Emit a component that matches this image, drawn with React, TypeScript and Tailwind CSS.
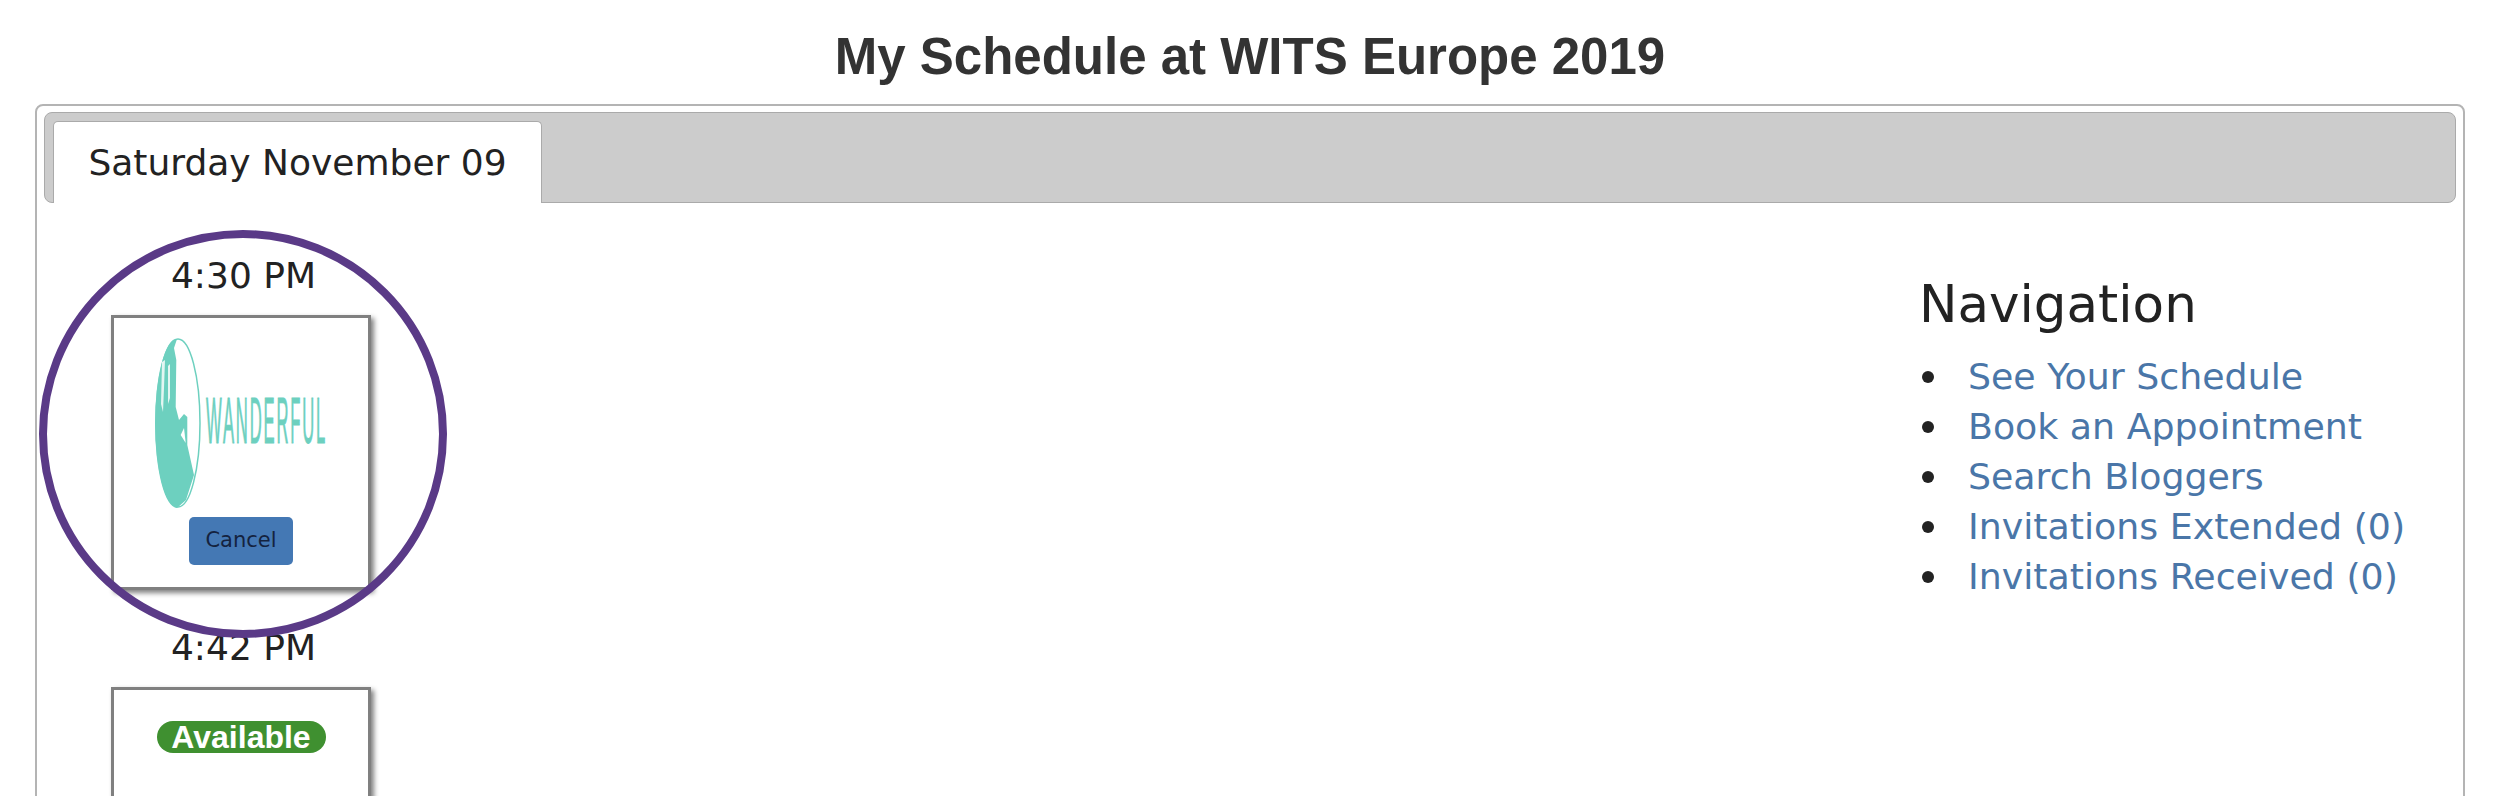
const NAV_LINKS = [
  "See Your Schedule",
  "Book an Appointment",
  "Search Bloggers",
  "Invitations Extended (0)",
  "Invitations Received (0)",
];

function WanderfulLogo() {
  return (
    <svg width="172" height="171" viewBox="0 0 172 171" className="mt-[20px] overflow-visible">
      <ellipse cx="23" cy="85" rx="22" ry="84" fill="#fff" stroke="#6dd0bf" strokeWidth="1.5" />
      <path
        d="M22 1L19 10L21.3 22L20.7 69L24 82L29 76L32.3 79L32.3 107L39 137L31 162L22 170A22 84.5 0 0 1 22 1Z"
        fill="#6dd0bf"
      />
      <path d="M25.7 97L29 90L30.7 105Z" fill="#fff" />
      <path d="M7 24L10 22L9 50L8 74L6 66ZM13 28L15 26L15 60L13 66Z" fill="#e4f6f2" />
      <text
        transform="translate(51 105) scale(0.26 1)"
        fontSize="64"
        fill="#6dd0bf"
        stroke="#6dd0bf"
        strokeWidth="1"
        letterSpacing="7"
        className="font-['Liberation_Sans',sans-serif]"
      >
        WANDERFUL
      </text>
    </svg>
  );
}

function TimeSlot({ time, children }: { time: string; children: React.ReactNode }) {
  return (
    <div className="w-[260px]">
      <div className="h-[97px] pt-[36px] pl-[5px] text-center text-[36px] leading-[44px] whitespace-nowrap text-[#222]">{time}</div>
      <div className="flex h-[275px] flex-col items-center border-[3px] border-[#808080] bg-white shadow-[3px_3px_5px_#808080]">
        {children}
      </div>
    </div>
  );
}

export default function App() {
  return (
    <div className="h-[796px] overflow-hidden bg-white font-['DejaVu_Sans',Verdana,sans-serif]">
      <h1 className="flex h-[104px] items-center justify-center pt-[11px] font-['Liberation_Sans',Arial,sans-serif] text-[51px] font-bold text-[#333]">
        My Schedule at WITS Europe 2019
      </h1>
      <div className="mx-[35px] rounded-t-[8px] border-2 border-[#b4b4b4] bg-white px-[7px] pt-[6px]">
        <div className="flex h-[91px] items-end rounded-[8px] border border-[#aaaaaa] bg-[#cccccc] pl-[8px]">
          <div className="-mb-px flex h-[82px] w-[489px] items-center justify-center rounded-t-[5px] border border-b-0 border-[#aaaaaa] bg-white text-[36px] text-[#222]">
            Saturday November 09
          </div>
        </div>
        <div className="flex items-start justify-between pl-[67px]">
          <div className="relative flex flex-col pt-[15px]">
            <TimeSlot time="4:30 PM">
              <WanderfulLogo />
              <button className="mt-[8px] h-[48px] w-[104px] rounded-[5px] bg-[#4478b4] text-[21px] text-[#14233f]">Cancel</button>
            </TimeSlot>
            <TimeSlot time="4:42 PM">
              <div className="mt-[31px] flex h-[32px] w-[169px] items-center justify-center rounded-full bg-[#3f9030] font-['Liberation_Sans',Arial,sans-serif] text-[32px] font-bold text-white">
                Available
              </div>
            </TimeSlot>
            <div className="absolute top-[27px] left-[-72px] z-10 size-[408px] rounded-full border-[8px] border-[#5a3a87]" />
          </div>
          <div className="w-[537px] pt-[69px] text-[36.3px] text-[#222]">
            <h2 className="text-[51.5px] leading-[64px] font-normal">Navigation</h2>
            <ul className="mt-[16px] flex flex-col">
              {NAV_LINKS.map((link) => (
                <li key={link} className="flex h-[50px] items-center">
                  <span className="mr-[34px] ml-[3px] size-[12px] rounded-full bg-[#222]" />
                  <a className="whitespace-nowrap text-[#4a76a8]">{link}</a>
                </li>
              ))}
            </ul>
          </div>
        </div>
      </div>
    </div>
  );
}
